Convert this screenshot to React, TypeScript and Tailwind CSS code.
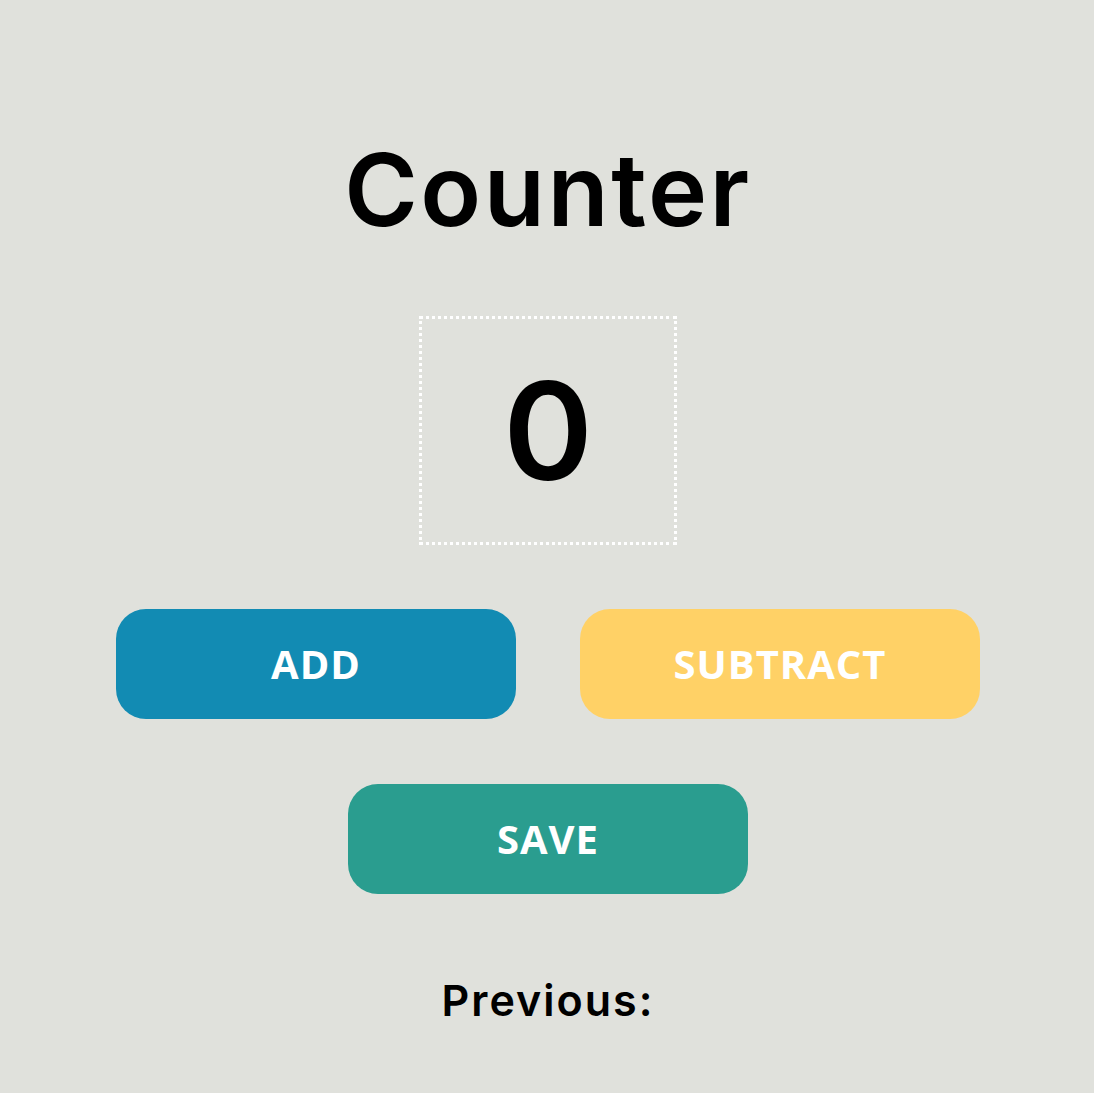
const btn =
  "w-[400px] h-[110px] rounded-[30px] text-white text-[40px] font-bold tracking-[1px] flex items-center justify-center font-['Open_Sans','Liberation_Sans',sans-serif]";

export default function App() {
  return (
    <div className="min-h-[1093px] w-full bg-[#e0e1dc] flex flex-col items-center pt-[130px] pl-[2px] font-['Inter','DejaVu_Sans',sans-serif] text-black">
      <h1 className="text-[100px] leading-[120px] font-semibold tracking-[2.5px]">
        Counter
      </h1>

      <div className="mt-[66px] w-[258px] h-[229px] border-[3px] border-dotted border-white flex items-center justify-center">
        <span className="text-[136px] leading-none font-semibold">0</span>
      </div>

      <div className="mt-[64px] flex gap-[64px]">
        <button className={`${btn} bg-[#128bb3]`}>ADD</button>
        <button className={`${btn} bg-[#ffd166]`}>SUBTRACT</button>
      </div>

      <button className={`${btn} mt-[65px] bg-[#2a9d8f]`}>SAVE</button>

      <h2 className="mt-[80px] text-[43px] leading-[52px] font-semibold tracking-[2px]">
        Previous:
      </h2>
    </div>
  );
}
